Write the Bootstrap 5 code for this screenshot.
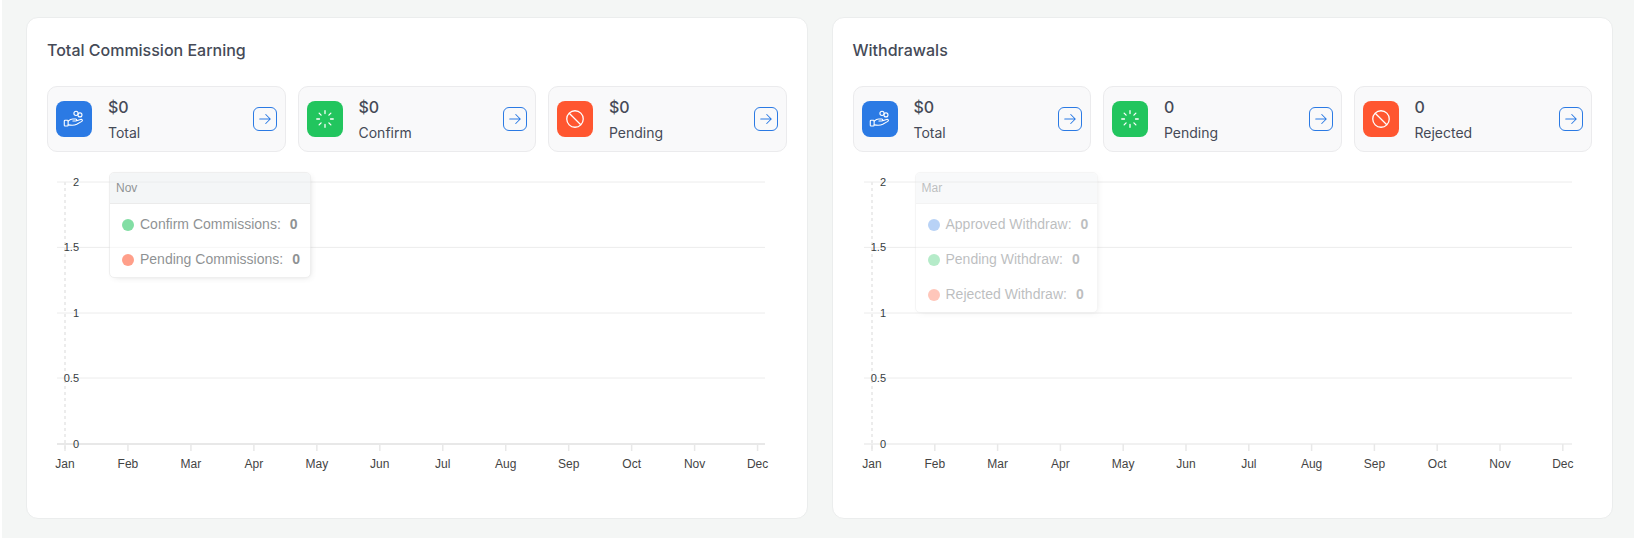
<!DOCTYPE html>
<html lang="en">
<head>
    <meta charset="UTF-8">
    <meta name="viewport" content="width=device-width, initial-scale=1.0">
    <title>Commission</title>
    <link href="https://cdn.jsdelivr.net/npm/bootstrap@5.3.0/dist/css/bootstrap.min.css" rel="stylesheet">
    <style>
        html { background: #fff; }
        body {
            background: #f4f6f5;
            margin-left: 2px;
            height: 538px;
            overflow: hidden;
            font-family: Inter, "Liberation Sans", sans-serif;
            color: #454a57;
        }
        .page-wrap { padding: 17px 21px 19px 24px; height: 538px; }
        .panel {
            flex: 1 1 0;
            min-width: 0;
            background: #fff;
            border: 1px solid #ebeded;
            border-radius: 12px;
            padding: 20px 20px 0;
        }
        .panel-title { font-size: 16px; font-weight: 500; line-height: 24px; margin: 0 0 24px; }
        .stat-row { display: grid; grid-template-columns: repeat(3, 1fr); gap: 12px; }
        .stat-box {
            height: 66px;
            padding: 0 8px;
            background: #f9f9fa;
            border: 1px solid #ebebed;
            border-radius: 10px;
        }
        .stat-icon {
            width: 36px; height: 36px;
            border-radius: 8px;
            color: #fff;
            flex: none;
        }
        .bg-blue { background: #2b7ae4; }
        .bg-green { background: #22c55e; }
        .bg-red { background: #ff5630; }
        .stat-text { margin-left: 16px; padding-top: 2px; }
        .stat-val { font-size: 16px; font-weight: 500; line-height: 24px; }
        .stat-lbl { font-size: 14px; line-height: 24px; margin-top: 2px; }
        .go-btn {
            width: 24px; height: 24px;
            border: 1px solid #2b7ae4;
            border-radius: 6px;
            color: #2b7ae4;
            flex: none;
        }
        .chart-wrap { position: relative; margin-top: 8px; height: 320px; }
        .chart-wrap svg { display: block; }
        .chart-wrap text { font-family: "Liberation Sans", Arial, sans-serif; }
        .chart-tip {
            position: absolute;
            top: 12px;
            background: #fff;
            border: 1px solid #e3e3e3;
            border-radius: 5px;
            box-shadow: 2px 2px 6px -4px #999;
            font-family: "Liberation Sans", Arial, sans-serif;
            color: #373d3f;
            overflow: hidden;
        }
        .tip-head {
            background: #eceff1;
            border-bottom: 1px solid #ddd;
            font-size: 12px;
            line-height: 30px;
            height: 31px;
            padding: 0 6px;
        }
        .tip-row { height: 35px; padding: 0 10px 0 12px; font-size: 14px; white-space: nowrap; }
        .tip-dot { width: 12px; height: 12px; border-radius: 50%; margin-right: 6px; flex: none; }
        .tip-row b { margin-left: 9px; }
        .tip-body { padding-top: 3px; }
        .tip-a { left: 62px; width: 202px; height: 106px; opacity: .56; }
        .tip-b { left: 62px; width: 183px; height: 141px; opacity: .33; }
    </style>
</head>
<body>
    <div class="page-wrap d-flex gap-4">

        <!-- commission -->
        <div class="panel">
            <h2 class="panel-title">Total Commission Earning</h2>
            <div class="stat-row">
                <div class="stat-box d-flex align-items-center">
                    <div class="stat-icon bg-blue d-flex align-items-center justify-content-center"><svg width="22" height="22"><use href="#ic-hand"/></svg></div>
                    <div class="stat-text flex-grow-1"><div class="stat-val">$0</div><div class="stat-lbl">Total</div></div>
                    <div class="go-btn d-flex align-items-center justify-content-center"><svg width="18" height="18"><use href="#ic-arrow"/></svg></div>
                </div>
                <div class="stat-box d-flex align-items-center">
                    <div class="stat-icon bg-green d-flex align-items-center justify-content-center"><svg width="22" height="22"><use href="#ic-loader"/></svg></div>
                    <div class="stat-text flex-grow-1"><div class="stat-val">$0</div><div class="stat-lbl">Confirm</div></div>
                    <div class="go-btn d-flex align-items-center justify-content-center"><svg width="18" height="18"><use href="#ic-arrow"/></svg></div>
                </div>
                <div class="stat-box d-flex align-items-center">
                    <div class="stat-icon bg-red d-flex align-items-center justify-content-center"><svg width="22" height="22"><use href="#ic-ban"/></svg></div>
                    <div class="stat-text flex-grow-1"><div class="stat-val">$0</div><div class="stat-lbl">Pending</div></div>
                    <div class="go-btn d-flex align-items-center justify-content-center"><svg width="18" height="18"><use href="#ic-arrow"/></svg></div>
                </div>
            </div>
            <div class="chart-wrap" data-jan="18" data-step="62.96" data-left="10" data-axis="#e0e0e0">
                <div class="chart-tip tip-a">
                    <div class="tip-head">Nov</div>
                    <div class="tip-body">
                        <div class="tip-row d-flex align-items-center"><span class="tip-dot bg-green"></span>Confirm Commissions:<b>0</b></div>
                        <div class="tip-row d-flex align-items-center"><span class="tip-dot bg-red"></span>Pending Commissions:<b>0</b></div>
                    </div>
                </div>
            </div>
        </div>

        <!-- withdrawals -->
        <div class="panel">
            <h2 class="panel-title">Withdrawals</h2>
            <div class="stat-row">
                <div class="stat-box d-flex align-items-center">
                    <div class="stat-icon bg-blue d-flex align-items-center justify-content-center"><svg width="22" height="22"><use href="#ic-hand"/></svg></div>
                    <div class="stat-text flex-grow-1"><div class="stat-val">$0</div><div class="stat-lbl">Total</div></div>
                    <div class="go-btn d-flex align-items-center justify-content-center"><svg width="18" height="18"><use href="#ic-arrow"/></svg></div>
                </div>
                <div class="stat-box d-flex align-items-center">
                    <div class="stat-icon bg-green d-flex align-items-center justify-content-center"><svg width="22" height="22"><use href="#ic-loader"/></svg></div>
                    <div class="stat-text flex-grow-1"><div class="stat-val">0</div><div class="stat-lbl">Pending</div></div>
                    <div class="go-btn d-flex align-items-center justify-content-center"><svg width="18" height="18"><use href="#ic-arrow"/></svg></div>
                </div>
                <div class="stat-box d-flex align-items-center">
                    <div class="stat-icon bg-red d-flex align-items-center justify-content-center"><svg width="22" height="22"><use href="#ic-ban"/></svg></div>
                    <div class="stat-text flex-grow-1"><div class="stat-val">0</div><div class="stat-lbl">Rejected</div></div>
                    <div class="go-btn d-flex align-items-center justify-content-center"><svg width="18" height="18"><use href="#ic-arrow"/></svg></div>
                </div>
            </div>
            <div class="chart-wrap" data-jan="19" data-step="62.8" data-left="11" data-axis="#ececec">
                <div class="chart-tip tip-b">
                    <div class="tip-head">Mar</div>
                    <div class="tip-body">
                        <div class="tip-row d-flex align-items-center"><span class="tip-dot bg-blue"></span>Approved Withdraw:<b>0</b></div>
                        <div class="tip-row d-flex align-items-center"><span class="tip-dot bg-green"></span>Pending Withdraw:<b>0</b></div>
                        <div class="tip-row d-flex align-items-center"><span class="tip-dot bg-red"></span>Rejected Withdraw:<b>0</b></div>
                    </div>
                </div>
            </div>
        </div>
    </div>

    <!-- icons -->
    <svg width="0" height="0" class="position-absolute">
        <symbol id="ic-arrow" viewBox="0 0 24 24"><path d="M5 12h14M13 18l6-6M13 6l6 6" fill="none" stroke="currentColor" stroke-width="1.4" stroke-linecap="round" stroke-linejoin="round"/></symbol>
        <symbol id="ic-loader" viewBox="0 0 24 24"><path d="M12 6V3M16.25 7.75 18.4 5.6M18 12h3M16.25 16.25 18.4 18.4M12 18v3M7.75 16.25 5.6 18.4M6 12H3M7.75 7.75 5.6 5.6" fill="none" stroke="currentColor" stroke-width="1.4" stroke-linecap="round"/></symbol>
        <symbol id="ic-ban" viewBox="0 0 24 24"><circle cx="12" cy="12" r="9" fill="none" stroke="currentColor" stroke-width="1.4"/><path d="M5.7 5.7l12.6 12.6" fill="none" stroke="currentColor" stroke-width="1.4"/></symbol>
        <symbol id="ic-hand" viewBox="0 0 24 24"><g fill="none" stroke="currentColor" stroke-width="1.2" stroke-linecap="round" stroke-linejoin="round"><rect x="1.4" y="13.4" width="4.2" height="6.2" rx=".8"/><path d="M5.6 14.4c1.800-1.600 3.400-2.400 5-2.400h3.400c1.200 0 1.400 2.200-.2 2.200h-3M14 14.200l5.200-1.700c1.700-.5 2.700 1.300 1.300 2.100l-5.500 3.200c-2.500 1.300-5.600 1.300-9.400.6"/><circle cx="14.2" cy="5.8" r="2.3"/><circle cx="18.5" cy="7.5" r="2.2"/></g></symbol>
    </svg>

    <script src="https://cdn.jsdelivr.net/npm/bootstrap@5.3.0/dist/js/bootstrap.bundle.min.js"></script>
    <script>
        // draw the two empty charts behind the tooltips
        const months = ["Jan","Feb","Mar","Apr","May","Jun","Jul","Aug","Sep","Oct","Nov","Dec"];
        const yTicks = [["2",22],["1.5",87.4],["1",153],["0.5",218],["0",284]];
        const NS = "http://www.w3.org/2000/svg";

        document.querySelectorAll(".chart-wrap").forEach(wrap => {
            const jan = +wrap.dataset.jan, step = +wrap.dataset.step, left = +wrap.dataset.left;
            let s = "";
            yTicks.forEach(([lbl, y], i) => {
                const c = i === 4 ? wrap.dataset.axis : "#ececec";
                s += `<line x1="${left}" x2="${left + 708}" y1="${y}" y2="${y}" stroke="${c}" stroke-width="${i === 4 ? 1.5 : 1}"/>`;
            });
            s += `<line x1="${jan}" x2="${jan}" y1="22" y2="291" stroke="#ececec" stroke-width="2" stroke-dasharray="3 3"/>`;
            months.forEach((m, i) => {
                const x = jan + i * step;
                s += `<line x1="${x}" x2="${x}" y1="284" y2="291" stroke="#e8e8e8" stroke-width="1.5"/>`;
                s += `<text x="${x}" y="308" text-anchor="middle" font-size="12" fill="#444">${m}</text>`;
            });
            yTicks.forEach(([lbl, y]) => {
                s += `<text x="${jan + 14}" y="${y + 4}" text-anchor="end" font-size="11" fill="#373d3f">${lbl}</text>`;
            });
            const svg = document.createElementNS(NS, "svg");
            svg.setAttribute("width", "741");
            svg.setAttribute("height", "320");
            svg.innerHTML = s;
            wrap.prepend(svg);
        });
    </script>
</body>
</html>
